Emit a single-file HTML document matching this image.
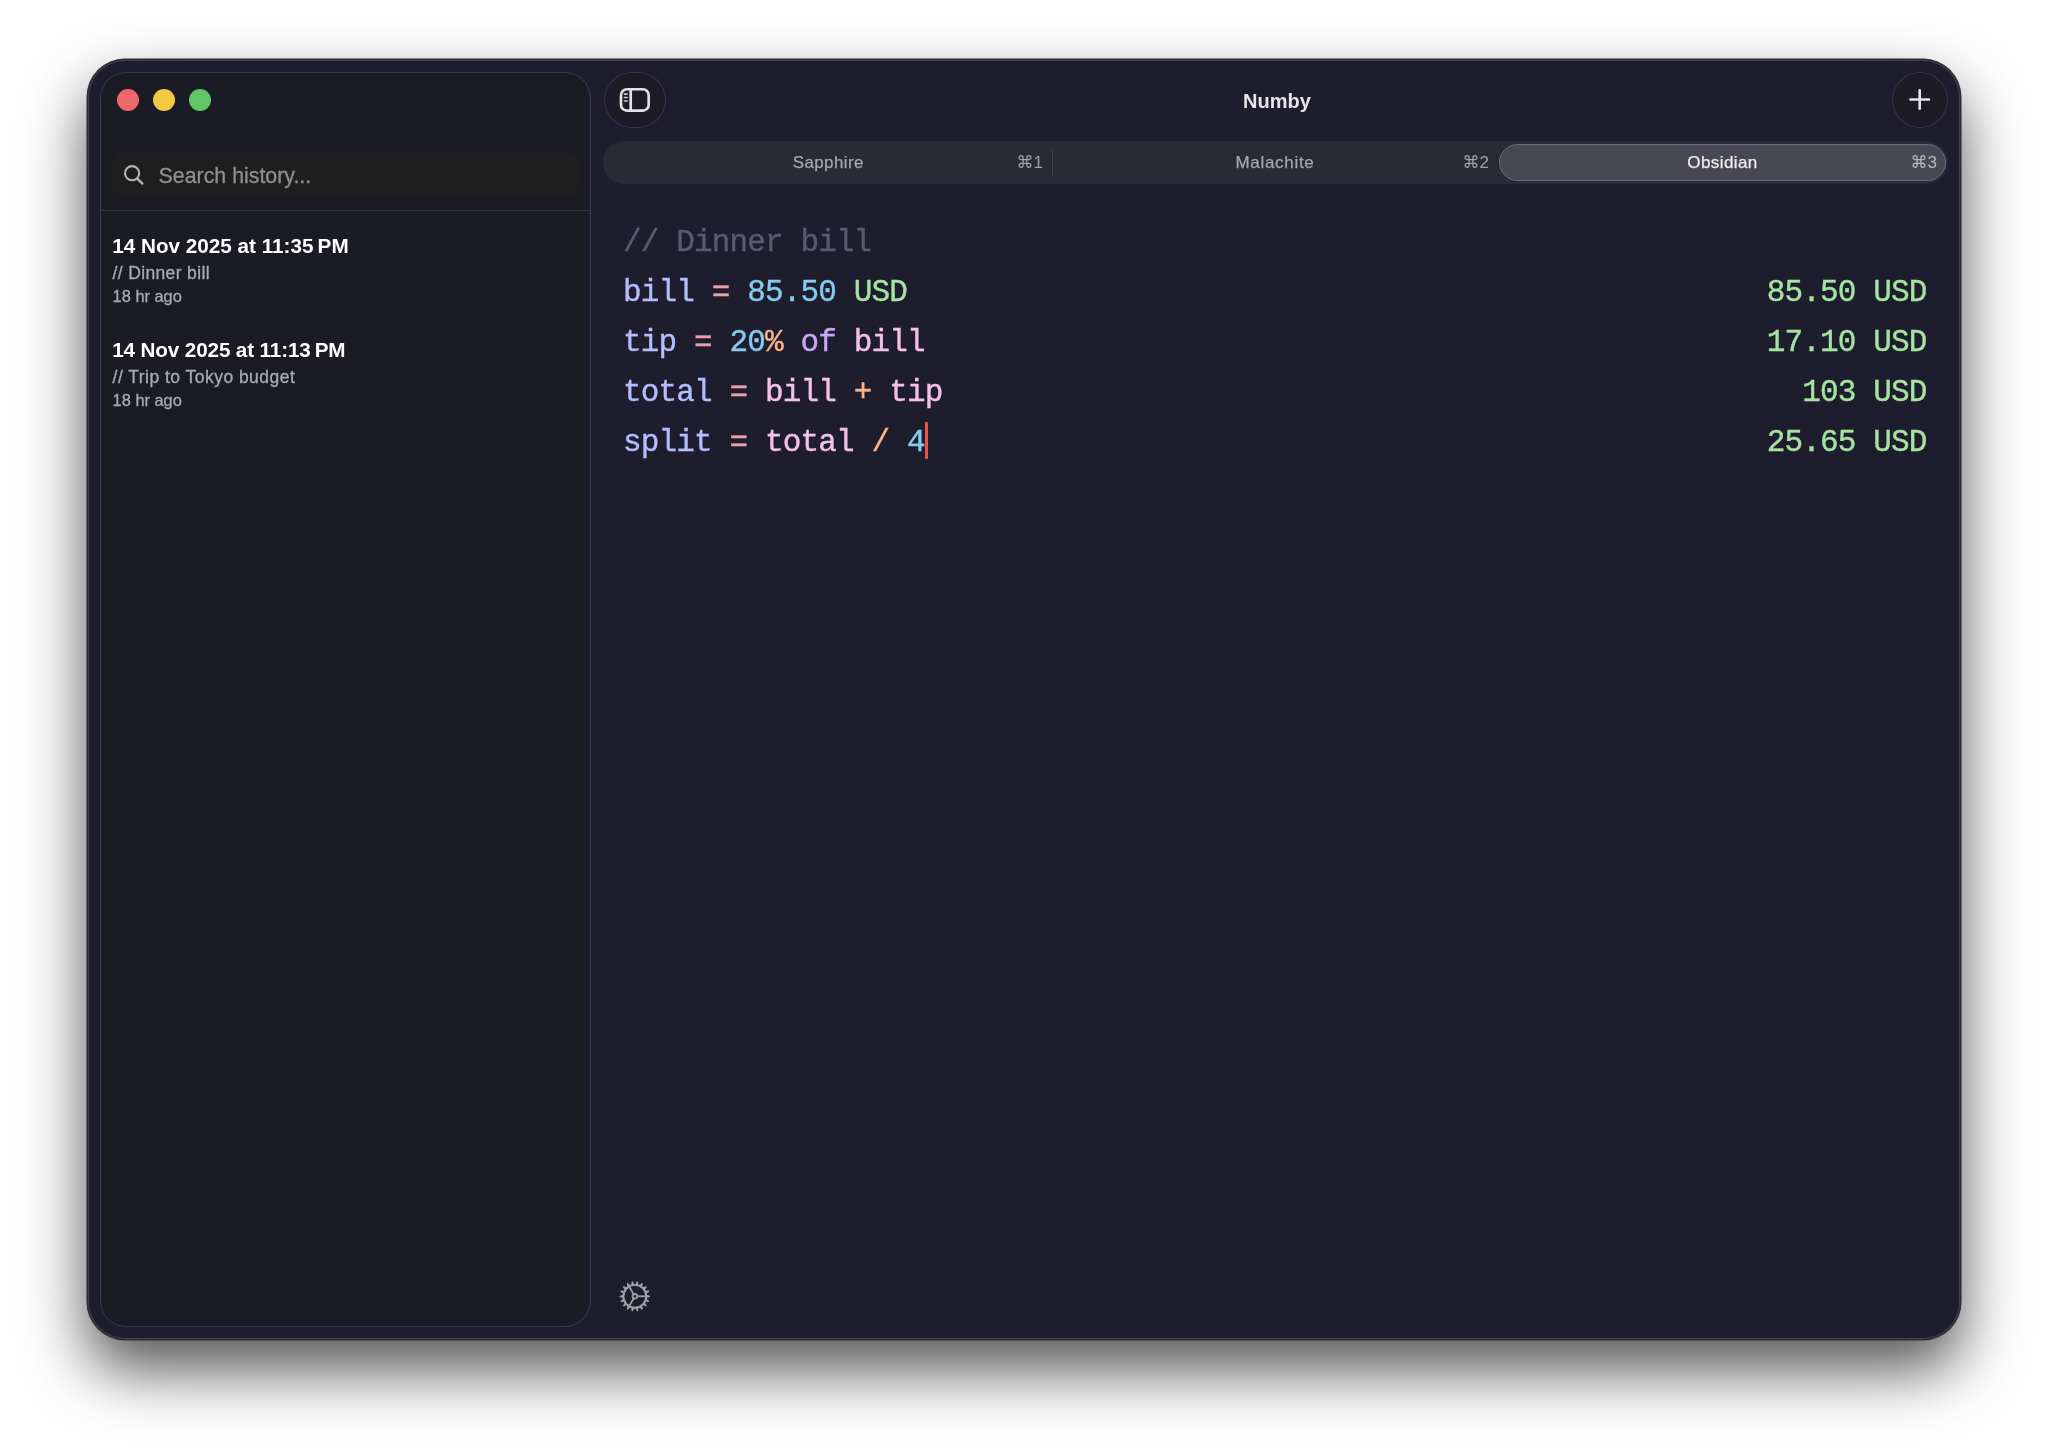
<!DOCTYPE html>
<html lang="en">
<head>
<meta charset="utf-8">
<title>Numby</title>
<style>
  html, body { margin: 0; padding: 0; }
  body {
    width: 2048px; height: 1455px; overflow: hidden; position: relative;
    background: #ffffff;
    font-family: "Liberation Sans", "DejaVu Sans", sans-serif;
    -webkit-font-smoothing: antialiased;
  }
  .abs { position: absolute; white-space: pre; }

  /* ---------- window ---------- */
  #window {
    position: absolute; left: 88px; top: 60px; width: 1872px; height: 1279px;
    box-sizing: border-box;
    border-radius: 37px;
    background: #1e1d2d;
    box-shadow:
      inset 0 0 0 1px #44424f,
      0 0 0 1.5px #2c2c31,
      0 30px 62px 1px rgba(0,0,0,0.67);
  }
  /* coordinates inside #content are page coordinates */
  #content { position: absolute; left: -88px; top: -60px; width: 2048px; height: 1455px; will-change: transform; }

  /* ---------- sidebar ---------- */
  #sidebar {
    position: absolute; left: 100px; top: 72px; width: 491px; height: 1255px;
    box-sizing: border-box;
    border: 1px solid #3a3955;
    border-radius: 26px;
    background: #1b1b26;
    box-shadow: inset -1px 0 0 0 rgba(58,57,85,0.3);
  }
  .light { position: absolute; width: 22px; height: 22px; border-radius: 50%; top: 89px; }
  #search {
    position: absolute; left: 112.5px; top: 152.7px; width: 465.7px; height: 44px;
    border-radius: 10px; background: #1e1e1e;
  }
  #search-text { left: 158.6px; top: 161.8px; font-size: 21.35px; line-height: 28px; color: #8f8f8f; -webkit-text-stroke: 0.3px #8f8f8f; }
  #divider { position: absolute; left: 101px; top: 209.5px; width: 489px; height: 1px; background: #313044; }

  .h-title { left: 112.2px; font-size: 20.7px; font-weight: bold; color: #ffffff; line-height: 26px; }
  .h-sub   { left: 112.6px; font-size: 17.5px; color: #a9a9b8; -webkit-text-stroke: 0.3px #a9a9b8; line-height: 22px; }
  .h-time  { left: 112.6px; font-size: 16.4px; color: #a9a9b8; -webkit-text-stroke: 0.3px #a9a9b8; line-height: 20px; }

  /* ---------- toolbar ---------- */
  .tbtn {
    position: absolute; box-sizing: border-box; height: 56.4px; top: 71.7px;
    border-radius: 28.2px; background: #1c1b26; border: 1px solid rgba(72,70,110,0.6);
  }
  #title { left: 1177px; width: 200px; text-align: center; top: 87px; font-size: 20px; font-weight: bold; color: #e6e6e8; line-height: 28px; }

  #seg {
    position: absolute; left: 603px; top: 141px; width: 1345px; height: 42.6px;
    border-radius: 21.3px; background: #2a2a37;
  }
  #seg-sel {
    position: absolute; left: 1499px; top: 143.5px; width: 447px; height: 37.4px; box-sizing: border-box;
    border-radius: 18.7px; background: #484852; border: 1px solid #6b6986;
  }
  #seg-sep { position: absolute; left: 1051.5px; top: 149px; width: 1px; height: 27px; background: #3f3f4b; }
  .seg-label { -webkit-text-stroke: 0.25px currentColor; font-size: 17px; line-height: 24px; top: 151.3px; width: 200px; text-align: center; letter-spacing: 0.4px; }
  .seg-key { font-size: 17px; line-height: 24px; top: 151.3px; text-align: right; width: 60px; font-family: "Liberation Sans", "DejaVu Sans", sans-serif; }

  /* ---------- editor ---------- */
  .code {
    font-family: "Liberation Mono", "DejaVu Sans Mono", monospace;
    font-size: 31px; letter-spacing: -0.863px; line-height: 40px; -webkit-text-stroke: 0.35px currentColor;
  }
  .code.l { left: 623px; }
  .code.r { right: 121.5px; text-align: right; color: #a6e3a1; }
  .c-com { color: #585b70; } .c-var { color: #b4befe; } .c-eq { color: #e8a1aa; }
  .c-num { color: #84ccee; } .c-unit { color: #a6e3a1; } .c-op { color: #fab387; }
  .c-kw { color: #cba6f7; } .c-ref { color: #f5c2e7; }
  #cursor { position: absolute; left: 925px; top: 421.5px; width: 2.6px; height: 37px; background: #e8554e; border-radius: 1px; }
</style>
</head>
<body>
<div id="window"><div id="content">

  <!-- sidebar -->
  <div id="sidebar"></div>
  <div class="light" style="left:117px;background:#ee6868"></div>
  <div class="light" style="left:153px;background:#f5c842"></div>
  <div class="light" style="left:188.7px;background:#62c567"></div>

  <div id="search"></div>
  <svg class="abs" style="left:120px;top:160px" width="30" height="30" viewBox="0 0 30 30">
    <circle cx="12.1" cy="13.2" r="7.1" fill="none" stroke="#b4b4b4" stroke-width="2.1"/>
    <line x1="17.3" y1="18.6" x2="22.4" y2="23.6" stroke="#b4b4b4" stroke-width="2.3" stroke-linecap="round"/>
  </svg>
  <div id="search-text" class="abs">Search history...</div>
  <div id="divider"></div>

  <div class="abs h-title" style="top:233px">14 Nov 2025 at 11:35&#8239;PM</div>
  <div class="abs h-sub"   style="top:262px;letter-spacing:0.35px">// Dinner bill</div>
  <div class="abs h-time"  style="top:286.3px">18 hr ago</div>

  <div class="abs h-title" style="top:337px;letter-spacing:-0.14px">14 Nov 2025 at 11:13&#8239;PM</div>
  <div class="abs h-sub"   style="top:366.2px;letter-spacing:0.47px">// Trip to Tokyo budget</div>
  <div class="abs h-time"  style="top:390.4px">18 hr ago</div>

  <!-- toolbar -->
  <div class="tbtn" style="left:604px;width:62px"></div>
  <svg class="abs" style="left:615px;top:80px" width="40" height="40" viewBox="0 0 40 40">
    <rect x="6" y="9.25" width="27.7" height="21.4" rx="6" ry="6" fill="none" stroke="#e2e2e2" stroke-width="2.7"/>
    <line x1="15.7" y1="9.25" x2="15.7" y2="30.65" stroke="#e2e2e2" stroke-width="2.7"/>
    <g stroke="#c8c8c8" stroke-width="1.6" stroke-linecap="round">
      <line x1="9.4" y1="14.1" x2="12.2" y2="14.1"/>
      <line x1="9.4" y1="17.5" x2="12.2" y2="17.5"/>
      <line x1="9.4" y1="21" x2="12.2" y2="21"/>
    </g>
  </svg>
  <div id="title" class="abs">Numby</div>
  <div class="tbtn" style="left:1892px;width:56.4px"></div>
  <svg class="abs" style="left:1900px;top:80px" width="40" height="40" viewBox="0 0 40 40">
    <path d="M19.7 10.3 V28.7 M10.5 19.5 H28.9" fill="none" stroke="#e6e6e6" stroke-width="2.6" stroke-linecap="round"/>
  </svg>

  <!-- segmented control -->
  <div id="seg"></div>
  <div id="seg-sel"></div>
  <div id="seg-sep"></div>
  <div class="abs seg-label" style="left:728.3px;color:#a6a6ae">Sapphire</div>
  <div class="abs seg-label" style="left:1175px;color:#a6a6ae;letter-spacing:0.7px">Malachite</div>
  <div class="abs seg-label" style="left:1622.5px;color:#ececee">Obsidian</div>
  <div class="abs seg-key" style="left:983px;color:#a0a0a8">&#8984;1</div>
  <div class="abs seg-key" style="left:1429px;color:#a0a0a8">&#8984;2</div>
  <div class="abs seg-key" style="left:1877px;color:#b6b6be">&#8984;3</div>

  <!-- editor -->
  <div class="abs code l" style="top:223px"><span class="c-com">// Dinner bill</span></div>
  <div class="abs code l" style="top:273px"><span class="c-var">bill</span> <span class="c-eq">=</span> <span class="c-num">85.50</span> <span class="c-unit">USD</span></div>
  <div class="abs code l" style="top:323px"><span class="c-var">tip</span> <span class="c-eq">=</span> <span class="c-num">20</span><span class="c-op">%</span> <span class="c-kw">of</span> <span class="c-ref">bill</span></div>
  <div class="abs code l" style="top:373px"><span class="c-var">total</span> <span class="c-eq">=</span> <span class="c-ref">bill</span> <span class="c-op">+</span> <span class="c-ref">tip</span></div>
  <div class="abs code l" style="top:423px"><span class="c-var">split</span> <span class="c-eq">=</span> <span class="c-ref">total</span> <span class="c-op">/</span> <span class="c-num">4</span></div>
  <div id="cursor"></div>

  <div class="abs code r" style="top:273px">85.50 USD</div>
  <div class="abs code r" style="top:323px">17.10 USD</div>
  <div class="abs code r" style="top:373px">103 USD</div>
  <div class="abs code r" style="top:423px">25.65 USD</div>

  <!-- settings gear -->
  <svg id="gear" class="abs" style="left:615px;top:1276px" width="40" height="40" viewBox="-19.84 -20.3 40 40">
    <path fill-rule="evenodd" d="M12.33 1.34 L15.19 0.61 L15.19 -0.61 L12.33 -1.34 L12.04 -2.96 L14.48 -4.62 L14.06 -5.77 L11.13 -5.47 L10.30 -6.90 L12.03 -9.30 L11.24 -10.23 L8.58 -8.95 L7.32 -10.01 L8.12 -12.85 L7.07 -13.46 L5.00 -11.35 L3.46 -11.91 L3.24 -14.85 L2.04 -15.06 L0.82 -12.37 L-0.82 -12.37 L-2.04 -15.06 L-3.24 -14.85 L-3.46 -11.91 L-5.00 -11.35 L-7.07 -13.46 L-8.12 -12.85 L-7.32 -10.01 L-8.58 -8.95 L-11.24 -10.23 L-12.03 -9.30 L-10.30 -6.90 L-11.13 -5.47 L-14.06 -5.77 L-14.48 -4.62 L-12.04 -2.96 L-12.33 -1.34 L-15.19 -0.61 L-15.19 0.61 L-12.33 1.34 L-12.04 2.96 L-14.48 4.62 L-14.06 5.77 L-11.13 5.47 L-10.30 6.90 L-12.03 9.30 L-11.24 10.23 L-8.58 8.95 L-7.32 10.01 L-8.12 12.85 L-7.07 13.46 L-5.00 11.35 L-3.46 11.91 L-3.24 14.85 L-2.04 15.06 L-0.82 12.37 L0.82 12.37 L2.04 15.06 L3.24 14.85 L3.46 11.91 L5.00 11.35 L7.07 13.46 L8.12 12.85 L7.32 10.01 L8.58 8.95 L11.24 10.23 L12.03 9.30 L10.30 6.90 L11.13 5.47 L14.06 5.77 L14.48 4.62 L12.04 2.96 Z M10.5 0 A10.5 10.5 0 1 0 -10.5 0 A10.5 10.5 0 1 0 10.5 0 Z" fill="#a0a0a8"/>
    <g fill="none" stroke="#a0a0a8" stroke-width="1.8"><line x1="2.20" y1="-0.00" x2="11.00" y2="-0.00"/><line x1="-1.10" y1="-1.91" x2="-5.50" y2="-9.53"/><line x1="-1.10" y1="1.91" x2="-5.50" y2="9.53"/><circle r="2.3" stroke-width="1.8"/></g>
  </svg>

</div></div>
</body>
</html>
